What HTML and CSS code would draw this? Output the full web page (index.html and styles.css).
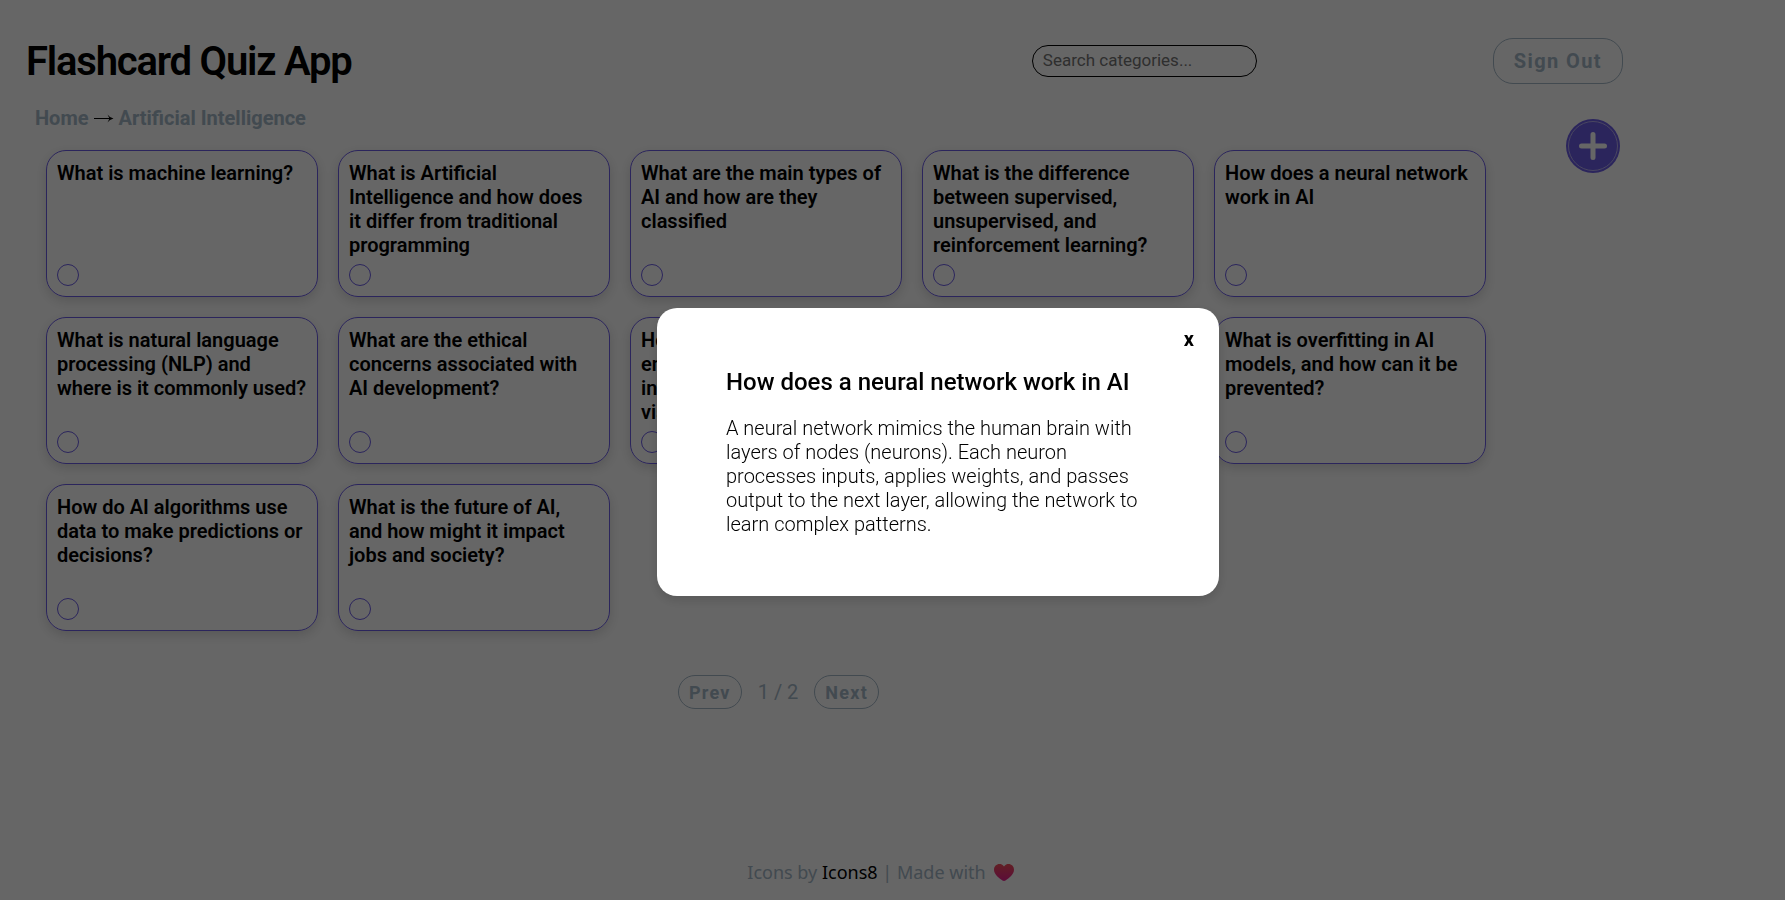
FILE: index.html
```html
<!DOCTYPE html>
<html lang="en">
<head>
<meta charset="utf-8">
<meta name="viewport" content="width=device-width, initial-scale=1">
<title>Flashcard Quiz App</title>
<link rel="stylesheet" href="styles.css">
</head>
<body>
<div class="page">
  <header class="header">
    <h1 class="title">Flashcard Quiz App</h1>
    <input class="search" type="search" placeholder="Search categories..." aria-label="Search categories">
    <button class="sign-out" type="button">Sign Out</button>
  </header>
  <nav class="breadcrumb" aria-label="Breadcrumb">
    <a href="#">Home</a>
    <svg class="arrow" viewBox="0 0 20 12" aria-hidden="true"><path class="shaft" d="M0 6.500H18"/><path d="M13.500 2.500Q15.500 5.500 19.500 6.500Q15.500 7.500 13.500 10.500L15.500 6.500Z"/></svg>
    <a href="#">Artificial Intelligence</a>
  </nav>
  <main class="main">
    <section class="cards" aria-label="Flashcards">
      <article class="card"><h2>What is machine learning?</h2><input type="checkbox" aria-label="Mark card 1 as learned"></article>
      <article class="card"><h2>What is Artificial Intelligence and how does it differ from traditional programming</h2><input type="checkbox" aria-label="Mark card 2 as learned"></article>
      <article class="card"><h2>What are the main types of AI and how are they classified</h2><input type="checkbox" aria-label="Mark card 3 as learned"></article>
      <article class="card"><h2>What is the difference between supervised, unsupervised, and reinforcement learning?</h2><input type="checkbox" aria-label="Mark card 4 as learned"></article>
      <article class="card"><h2>How does a neural network work in AI</h2><input type="checkbox" aria-label="Mark card 5 as learned"></article>
      <article class="card"><h2>What is natural language processing (NLP) and where is it commonly used?</h2><input type="checkbox" aria-label="Mark card 6 as learned"></article>
      <article class="card"><h2>What are the ethical concerns associated with AI development?</h2><input type="checkbox" aria-label="Mark card 7 as learned"></article>
      <article class="card"><h2>How does computer vision enable computers to interpret and understand visual information?</h2><input type="checkbox" aria-label="Mark card 8 as learned"></article>
      <article class="card"><h2>What is deep learning?</h2><input type="checkbox" aria-label="Mark card 9 as learned"></article>
      <article class="card"><h2>What is overfitting in AI models, and how can it be prevented?</h2><input type="checkbox" aria-label="Mark card 10 as learned"></article>
      <article class="card"><h2>How do AI algorithms use data to make predictions or decisions?</h2><input type="checkbox" aria-label="Mark card 11 as learned"></article>
      <article class="card"><h2>What is the future of AI, and&nbsp;how might it impact jobs and society?</h2><input type="checkbox" aria-label="Mark card 12 as learned"></article>
    </section>
    <button class="add" type="button" aria-label="Add flashcard">
      <svg viewBox="0 0 54 54" aria-hidden="true">
        <circle class="disc" cx="27" cy="27" r="27"/>
        <circle class="ring" cx="27" cy="27" r="24.500"/>
        <path class="plus" d="M27 15.500V38.500M15.500 27H38.500"/>
      </svg>
    </button>
  </main>
  <nav class="pager" aria-label="Pages">
    <button type="button">Prev</button>
    <span>1 / 2</span>
    <button type="button">Next</button>
  </nav>
  <footer class="footer">
    <span>Icons by <a href="#">Icons8</a> | Made with</span>
    <svg class="heart" viewBox="0 0 20 17" role="img" aria-label="love">
      <defs><linearGradient id="heart-fill" x1="0" y1="0" x2="0" y2="1"><stop offset="0" stop-color="#f44f5a"/><stop offset="1" stop-color="#e5208f"/></linearGradient></defs>
      <path fill="url(#heart-fill)" d="M10 2.500C8.500.500 7 0 5.500 0C2.500 0 0 2.300 0 5.700C0 10.500 5 14 8.500 16.500Q10 17.400 11.500 16.500C15 14 20 10.500 20 5.700C20 2.300 17.500 0 14.500 0C13 0 11.500.500 10 2.500Z"/>
    </svg>
  </footer>
</div>
<div class="overlay">
  <div class="modal" role="dialog" aria-modal="true" aria-labelledby="modal-title">
    <button class="close" type="button" aria-label="Close">x</button>
    <h2 id="modal-title">How does a neural network work in AI</h2>
    <p>A neural network mimics the human brain with layers of nodes (neurons). Each neuron processes inputs, applies weights, and passes output to the next layer, allowing the network to learn complex patterns.</p>
  </div>
</div>
</body>
</html>
```
FILE: styles.css
```css
:root {
  --purple: #6c5ce7;
  --slate: #a5b8c8;
}

* {
  box-sizing: border-box;
}

body {
  margin: 0;
  background: #fff;
  color: #000;
  font-family: Roboto, sans-serif;
  font-size: 20px;
  line-height: 24px;
}

button,
input {
  margin: 0;
  font-family: inherit;
}

.page {
  display: flex;
  flex-direction: column;
  min-height: 100vh;
  padding: 38px 162px 16px 26px;
}

.header {
  display: flex;
  align-items: center;
}

.title {
  margin: 0;
  padding-top: 2px;
  font-size: 40px;
  line-height: 44px;
  font-weight: 600;
  letter-spacing: -0.03em;
}

.search {
  width: 225px;
  height: 32px;
  margin-left: auto;
  margin-right: 236px;
  padding: 0 10px 2px;
  border: 1px solid #000;
  border-radius: 16px;
  background: transparent;
  font-size: 17px;
  appearance: none;
}

.search::placeholder {
  color: #757575;
}

.sign-out {
  height: 46px;
  padding: 0 20px;
  border: 1px solid var(--slate);
  border-radius: 20px;
  background: transparent;
  color: var(--slate);
  font-size: 20px;
  font-weight: 700;
  letter-spacing: 0.07em;
}

.breadcrumb {
  display: flex;
  align-items: center;
  gap: 5px;
  margin-top: 22px;
  padding-left: 9px;
  font-weight: 700;
}

.breadcrumb a {
  color: var(--slate);
  text-decoration: none;
}

.arrow {
  width: 20px;
  height: 12px;
}

.shaft {
  stroke: #000;
  stroke-width: 1;
}

.main {
  display: flex;
  justify-content: space-between;
  align-items: flex-start;
  padding-left: 20px;
  padding-right: 3px;
}

.cards {
  display: grid;
  flex: 0 1 1440px;
  grid-template-columns: repeat(auto-fill, 272px);
  gap: 20px;
  margin-top: 20px;
}

.card {
  display: flex;
  flex-direction: column;
  justify-content: space-between;
  min-height: 147px;
  padding: 10px;
  border: 1px solid var(--purple);
  border-radius: 20px;
  box-shadow: 0 4px 12px rgba(0, 0, 0, 0.15);
}

.card h2 {
  margin: 0;
  font-size: 20px;
  line-height: 24px;
  font-weight: 600;
}

.card input {
  width: 22px;
  height: 22px;
  border: 1px solid var(--purple);
  border-radius: 50%;
  appearance: none;
}

.add {
  width: 54px;
  height: 54px;
  margin-top: -11px;
  padding: 0;
  border: 0;
  border-radius: 50%;
  background: transparent;
}

.add svg {
  display: block;
}

.disc {
  fill: var(--purple);
}

.ring {
  fill: none;
  stroke: #b8b0f0;
  stroke-width: 1;
}

.plus {
  fill: none;
  stroke: #fff;
  stroke-width: 5;
  stroke-linecap: round;
}

.pager {
  display: flex;
  justify-content: center;
  align-items: center;
  gap: 16px;
  margin-top: 44px;
  padding-right: 92px;
  color: var(--slate);
}

.pager button {
  height: 34px;
  padding: 0 10px;
  border: 1px solid var(--slate);
  border-radius: 17px;
  background: transparent;
  color: var(--slate);
  font-size: 18px;
  font-weight: 700;
  letter-spacing: 0.07em;
}

.footer {
  display: flex;
  justify-content: center;
  align-items: center;
  gap: 8px;
  margin-top: auto;
  padding-left: 112px;
  color: var(--slate);
  font-family: "Noto Sans", sans-serif;
  font-size: 18px;
}

.footer a {
  color: #000;
  text-decoration: none;
}

.heart {
  width: 20px;
  height: 17px;
}

.overlay {
  position: fixed;
  inset: 0;
  display: flex;
  justify-content: center;
  align-items: center;
  padding: 4px 0 0 91px;
  background: rgba(0, 0, 0, 0.6);
}

.modal {
  display: flex;
  flex-direction: column;
  width: 562px;
  padding: 20px 20px 60px;
  border-radius: 20px;
  background: #fff;
  box-shadow: 0 4px 12px rgba(0, 0, 0, 0.15);
}

.modal h2 {
  margin: 18px 49px 0;
  font-size: 24px;
  line-height: 28px;
  font-weight: 500;
}

.modal p {
  margin: 20px 49px 0;
  font-weight: 300;
}

.close {
  align-self: flex-end;
  padding: 0 5px;
  border: 0;
  background: transparent;
  font-size: 20px;
  line-height: 22px;
  font-weight: 700;
}
```
